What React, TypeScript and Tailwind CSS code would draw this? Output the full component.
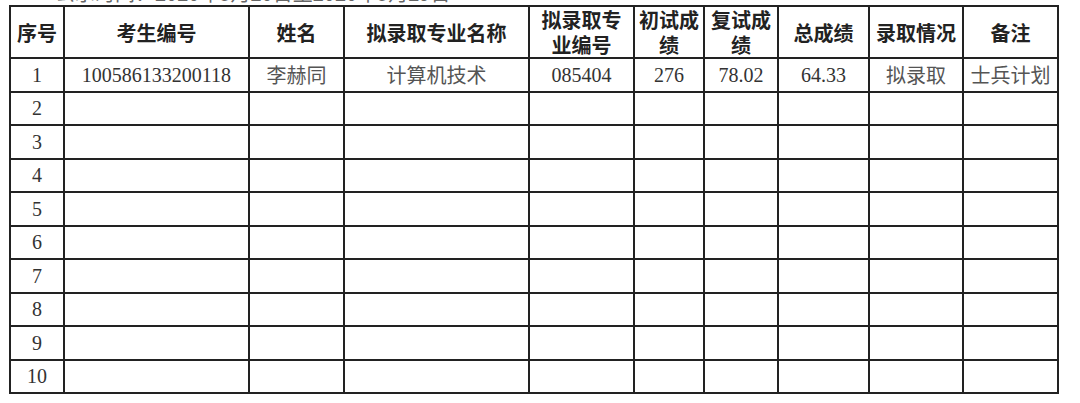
import React from 'react';

const colWidths = [
  'w-[54px]',
  'w-[185px]',
  'w-[95px]',
  'w-[185px]',
  'w-[105px]',
  'w-[70px]',
  'w-[74px]',
  'w-[91px]',
  'w-[94px]',
  'w-[95px]',
];

const headers = [
  '序号',
  '考生编号',
  '姓名',
  '拟录取专业名称',
  '拟录取专业编号',
  '初试成绩',
  '复试成绩',
  '总成绩',
  '录取情况',
  '备注',
];

const firstRow = ['1', '100586133200118', '李赫同', '计算机技术', '085404', '276', '78.02', '64.33', '拟录取', '士兵计划'];

const hasCjk = (s: string) => /[\u4e00-\u9fa5]/.test(s);

const App: React.FC = () => {
  const rows = Array.from({ length: 10 }, (_, i) =>
    i === 0 ? firstRow : [String(i + 1), '', '', '', '', '', '', '', '', '']
  );

  return (
    <div className="w-[1080px] h-[403px] bg-white overflow-hidden">
      {/* caption above the table, mostly scrolled out of view */}
      <div className="h-[5px] overflow-hidden pl-[55px]">
        <p className="mt-[-17px] leading-[20px] text-[20px] text-[#666] whitespace-nowrap font-['Noto_Sans_CJK_SC','Noto_Sans',sans-serif]">
          公示时间：2020年5月20日至2020年5月29日
        </p>
      </div>

      <table className="ml-[9px] w-[1048px] table-fixed border-collapse border-2 border-[#222]">
        <colgroup>
          {colWidths.map((w, i) => (
            <col key={i} className={w} />
          ))}
        </colgroup>
        <thead>
          <tr className="h-[52px]">
            {headers.map((h, i) => (
              <th
                key={i}
                className="border-2 border-[#222] px-[3px] py-0 text-center align-middle text-[20px] leading-[25px] font-bold text-[#222] font-['Noto_Sans_CJK_SC','Noto_Sans',sans-serif]"
              >
                {h}
              </th>
            ))}
          </tr>
        </thead>
        <tbody>
          {rows.map((r, ri) => (
            <tr key={ri} className="h-[33.5px]">
              {r.map((c, ci) => (
                <td
                  key={ci}
                  className={
                    hasCjk(c)
                      ? "border-2 border-[#222] p-0 text-center align-middle text-[20px] leading-[24px] whitespace-nowrap text-[#555] font-['Noto_Sans_CJK_SC','Noto_Sans',sans-serif]"
                      : "border-2 border-[#222] p-0 text-center align-middle text-[20px] leading-[24px] whitespace-nowrap text-[#333] font-['Liberation_Serif','Noto_Sans_CJK_SC',serif]"
                  }
                >
                  {c}
                </td>
              ))}
            </tr>
          ))}
        </tbody>
      </table>
    </div>
  );
};

export default App;
